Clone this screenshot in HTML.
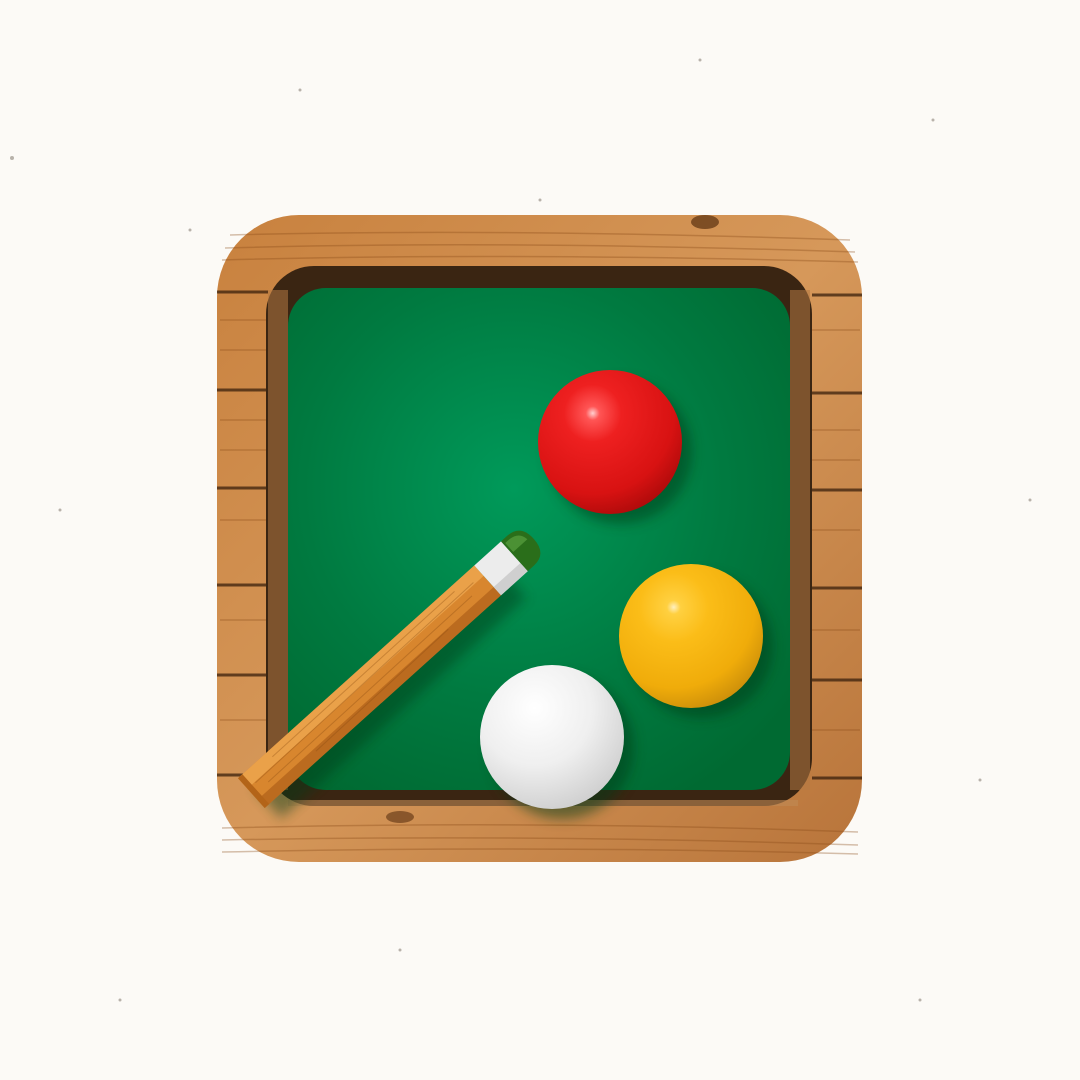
<!DOCTYPE html>
<html><head><meta charset="utf-8"><style>
html,body{margin:0;padding:0;background:#fcfaf6;}
svg{display:block}
</style></head><body>
<svg width="1080" height="1080" viewBox="0 0 1080 1080" xmlns="http://www.w3.org/2000/svg">
<defs>
<linearGradient id="wood" x1="0" y1="0" x2="1" y2="1">
<stop offset="0" stop-color="#c8813e"/><stop offset="0.5" stop-color="#d6985a"/><stop offset="1" stop-color="#b8743a"/>
</linearGradient>
<radialGradient id="felt" cx="0.45" cy="0.4" r="0.7">
<stop offset="0" stop-color="#009a5a"/><stop offset="0.6" stop-color="#007a40"/><stop offset="1" stop-color="#006a32"/>
</radialGradient>
<radialGradient id="red" cx="0.38" cy="0.3" r="0.8">
<stop offset="0" stop-color="#ffd0d0"/><stop offset="0.06" stop-color="#f55"/><stop offset="0.25" stop-color="#ee2020"/><stop offset="0.7" stop-color="#d81212"/><stop offset="1" stop-color="#a00808"/>
</radialGradient>
<radialGradient id="yel" cx="0.38" cy="0.3" r="0.8">
<stop offset="0" stop-color="#fff0c0"/><stop offset="0.06" stop-color="#ffd040"/><stop offset="0.3" stop-color="#fbbd18"/><stop offset="0.7" stop-color="#f0ac0a"/><stop offset="1" stop-color="#c0850a"/>
</radialGradient>
<radialGradient id="wht" cx="0.38" cy="0.3" r="0.8">
<stop offset="0" stop-color="#ffffff"/><stop offset="0.5" stop-color="#efefef"/><stop offset="1" stop-color="#c9c9c9"/>
</radialGradient>
<filter id="sh" x="-30%" y="-30%" width="160%" height="160%"><feGaussianBlur stdDeviation="6"/></filter>
</defs>
<g fill="#8a8278" opacity="0.6">
<circle cx="12" cy="158" r="2"/><circle cx="190" cy="230" r="1.5"/><circle cx="540" cy="200" r="1.5"/><circle cx="933" cy="120" r="1.5"/><circle cx="1030" cy="500" r="1.5"/><circle cx="60" cy="510" r="1.5"/><circle cx="920" cy="1000" r="1.5"/><circle cx="120" cy="1000" r="1.5"/><circle cx="980" cy="780" r="1.5"/><circle cx="400" cy="950" r="1.5"/><circle cx="700" cy="60" r="1.5"/><circle cx="300" cy="90" r="1.5"/>
</g>
<rect x="217" y="215" width="645" height="647" rx="82" fill="url(#wood)"/>
<g stroke="#8a4a18" stroke-opacity="0.35" stroke-width="1.5" fill="none">
<path d="M230 235 Q500 228 850 240"/><path d="M225 248 Q500 240 855 252"/><path d="M222 260 Q500 252 858 262"/>
<path d="M222 828 Q540 820 858 832"/><path d="M222 840 Q540 834 858 845"/><path d="M222 852 Q540 845 858 854"/>
<path d="M220 320 H266"/><path d="M220 350 H266"/><path d="M220 420 H266"/><path d="M220 450 H266"/><path d="M220 520 H266"/><path d="M220 620 H266"/><path d="M220 720 H266"/>
<path d="M812 330 H860"/><path d="M812 430 H860"/><path d="M812 460 H860"/><path d="M812 530 H860"/><path d="M812 630 H860"/><path d="M812 730 H860"/>
</g>
<g stroke="#3a200c" stroke-width="3" opacity="0.75">
<line x1="217" y1="292" x2="268" y2="292"/><line x1="812" y1="295" x2="862" y2="295"/>
<line x1="217" y1="390" x2="268" y2="390"/><line x1="812" y1="393" x2="862" y2="393"/>
<line x1="217" y1="488" x2="268" y2="488"/><line x1="812" y1="490" x2="862" y2="490"/>
<line x1="217" y1="585" x2="268" y2="585"/><line x1="812" y1="588" x2="862" y2="588"/>
<line x1="217" y1="675" x2="268" y2="675"/><line x1="812" y1="680" x2="862" y2="680"/>
<line x1="217" y1="775" x2="268" y2="775"/><line x1="812" y1="778" x2="862" y2="778"/>
</g>
<ellipse cx="705" cy="222" rx="14" ry="7" fill="#5a3010" opacity="0.7"/>
<ellipse cx="400" cy="817" rx="14" ry="6" fill="#5a3010" opacity="0.6"/>
<rect x="266" y="266" width="546" height="540" rx="48" fill="#3a2512"/>
<rect x="268" y="290" width="20" height="500" fill="#b57a44" opacity="0.55"/>
<rect x="790" y="290" width="20" height="500" fill="#b57a44" opacity="0.55"/>
<rect x="288" y="800" width="510" height="6" fill="#c08a55" opacity="0.6"/>
<rect x="288" y="288" width="502" height="502" rx="38" fill="url(#felt)"/>
<circle cx="620" cy="452" r="72" fill="#003a18" opacity="0.5" filter="url(#sh)"/>
<circle cx="701" cy="646" r="72" fill="#003a18" opacity="0.5" filter="url(#sh)"/>
<circle cx="562" cy="747" r="72" fill="#003a18" opacity="0.5" filter="url(#sh)"/>
<circle cx="610" cy="442" r="72" fill="url(#red)"/>
<circle cx="691" cy="636" r="72" fill="url(#yel)"/>
<circle cx="552" cy="737" r="72" fill="url(#wht)"/>
<g transform="translate(405,672) rotate(-42)">
<rect x="-190" y="-14" width="330" height="40" fill="#003a18" opacity="0.45" filter="url(#sh)"/>
</g>
<g transform="translate(397,662) rotate(-42)">
<rect x="-196" y="-20" width="318" height="40" fill="#d8862e"/>
<rect x="-196" y="-20" width="318" height="14" fill="#efa850" opacity="0.8"/>
<rect x="-196" y="9" width="318" height="11" fill="#a85a16" opacity="0.6"/>
<g stroke="#8a4a10" stroke-opacity="0.35" stroke-width="1"><line x1="-186" y1="-5" x2="110" y2="-8"/><line x1="-176" y1="3" x2="100" y2="1"/><line x1="-156" y1="-13" x2="90" y2="-14"/><line x1="-120" y1="12" x2="60" y2="10"/></g>
<rect x="-196" y="-20" width="6" height="40" fill="#b36418"/>
<rect x="122" y="-20" width="36" height="40" fill="#ececec"/>
<rect x="122" y="9" width="36" height="11" fill="#cfcfcf"/>
<path d="M158 -20 L166 -20 Q184 -20 184 0 Q184 20 166 20 L158 20 Z" fill="#2a6e1a"/>
<path d="M160 -16 L166 -16 Q178 -15 179 -4 L160 -4 Z" fill="#5aa040" opacity="0.7"/>
</g>
</svg>
</body></html>
